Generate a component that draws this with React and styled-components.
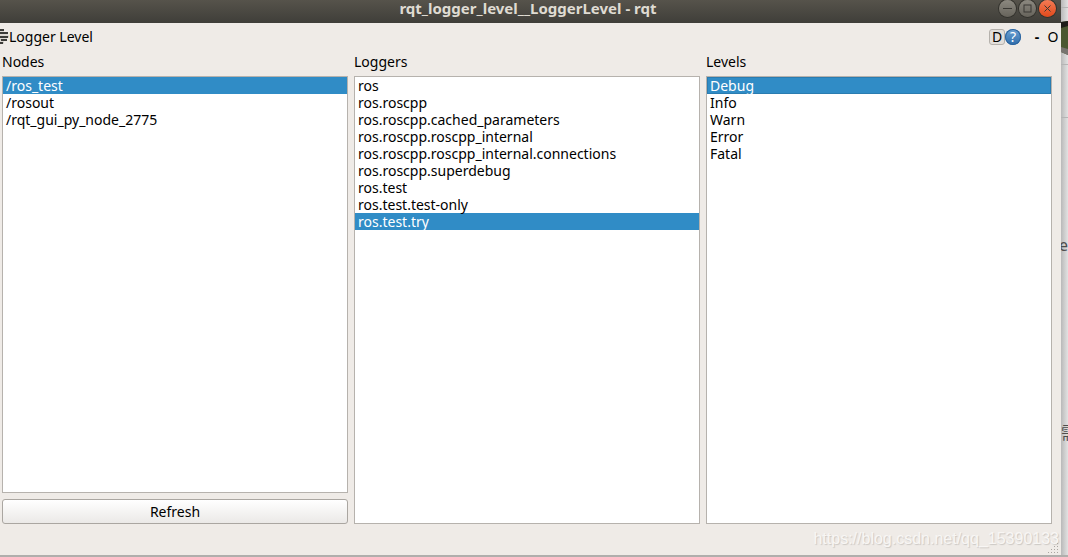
import React, { useState } from "react";
import styled, { createGlobalStyle } from "styled-components";

const nodes = ["/ros_test", "/rosout", "/rqt_gui_py_node_2775"];

const loggers = [
  "ros",
  "ros.roscpp",
  "ros.roscpp.cached_parameters",
  "ros.roscpp.roscpp_internal",
  "ros.roscpp.roscpp_internal.connections",
  "ros.roscpp.superdebug",
  "ros.test",
  "ros.test.test-only",
  "ros.test.try",
];

const levels = ["Debug", "Info", "Warn", "Error", "Fatal"];

const ListPanel = ({ title, items, initial, children, focused }) => {
  const [selected, setSelected] = useState(initial);
  return (
    <Panel>
      <PanelTitle>{title}</PanelTitle>
      <List aria-label={title}>
        {items.map((item) => (
          <li key={item}>
            <Row
              type="button"
              aria-pressed={item === selected}
              $selected={item === selected}
              $focused={focused && item === selected}
              onClick={() => setSelected(item)}
            >
              {item}
            </Row>
          </li>
        ))}
      </List>
      {children}
    </Panel>
  );
};

const App = () => {
  return (
    <Desktop>
      <GlobalStyle />
      <Window>
        <TitleBar>
          <WindowTitle>rqt_logger_level__LoggerLevel - rqt</WindowTitle>
          <WindowControls>
            <WindowButton type="button" aria-label="Minimize">
              <svg width="17" height="17" viewBox="0 0 17 17">
                <path d="M4 8.5h9" />
              </svg>
            </WindowButton>
            <WindowButton type="button" aria-label="Maximize">
              <svg width="17" height="17" viewBox="0 0 17 17">
                <rect x="5" y="5" width="7" height="7" />
              </svg>
            </WindowButton>
            <WindowButton type="button" aria-label="Close" $close>
              <svg width="17" height="17" viewBox="0 0 17 17">
                <path d="M5.5 5.5l6 6M11.5 5.5l-6 6" />
              </svg>
            </WindowButton>
          </WindowControls>
        </TitleBar>

        <DockBar>
          <DockIcon width="9" height="16" viewBox="0 0 9 16">
            <path d="M0 1.5h4M0 4.5h8M0 7.5h9M0 10.5h7M0 13.5h4" stroke="#c9c6c0" />
            <path d="M0 1h4M0 4h8M0 8h8M1 11h6M0 14h3" stroke="#3c3c39" />
          </DockIcon>
          <DockTitle>Logger Level</DockTitle>
          <DockTool type="button" $boxed>
            D
          </DockTool>
          <HelpButton type="button" aria-label="Help">
            ?
          </HelpButton>
          <DockTool type="button" $bold>
            -
          </DockTool>
          <DockTool type="button">O</DockTool>
        </DockBar>

        <Panels>
          <ListPanel title="Nodes" items={nodes} initial="/ros_test">
            <RefreshButton type="button">Refresh</RefreshButton>
          </ListPanel>
          <ListPanel title="Loggers" items={loggers} initial="ros.test.try" />
          <ListPanel title="Levels" items={levels} initial="Debug" focused />
        </Panels>

        <StatusBar>
          <Watermark>https://blog.csdn.net/qq_15390133</Watermark>
          <Grip width="12" height="12" viewBox="0 0 12 12">
            <path d="M10 1.5h1M7 4.5h1M10 4.5h1M4 7.5h1M7 7.5h1M10 7.5h1M1 10.5h1M4 10.5h1M7 10.5h1M10 10.5h1" />
          </Grip>
        </StatusBar>
      </Window>

      <Behind>
        <BehindRule $top={7} />
        <BehindPhoto width="7" height="34" viewBox="0 0 7 34">
          <path d="M0 1l7-1v34l-7-3z" fill="#4a5730" />
          <path d="M0 1l7-1v5l-7 2z" fill="#1d1c18" />
          <path d="M0 26l7 2v6l-7-3z" fill="#77746f" />
        </BehindPhoto>
        <BehindRule $top={64} />
        <BehindRule $top={117} />
        <BehindText $top={235} $end>
          ge
        </BehindText>
        <BehindText $top={423}>需</BehindText>
      </Behind>
    </Desktop>
  );
};

export default App;

const GlobalStyle = createGlobalStyle`
  * {
    box-sizing: border-box;
  }

  body {
    margin: 0;
    font-family: "Noto Sans", "Noto Sans CJK SC", sans-serif;
    font-size: 14px;
    color: #000;
  }

  button {
    margin: 0;
    padding: 0;
    border: 0;
    background: none;
    font: inherit;
    color: inherit;
  }
`;

const Desktop = styled.div`
  display: flex;
  min-height: 100vh;
  padding-bottom: 2px;
  background: #b0aeac;
`;

const Window = styled.main`
  display: flex;
  flex: 1;
  flex-direction: column;
  min-width: 0;
  background: #efebe7;
`;

const TitleBar = styled.header`
  display: grid;
  grid-template-columns: 1fr auto 1fr;
  height: 23px;
  padding-right: 5px;
  background: linear-gradient(#56534b, #3f3e39);
`;

const WindowTitle = styled.h1`
  grid-column: 2;
  margin: 0;
  font-size: 15px;
  font-weight: 700;
  line-height: 16px;
  color: #dfdbd2;
`;

const WindowControls = styled.div`
  display: flex;
  justify-content: flex-end;
  gap: 3px;
`;

const WindowButton = styled.button`
  display: flex;
  width: 17px;
  height: 17px;
  border-radius: 50%;
  background: ${(props) =>
    props.$close
      ? "linear-gradient(#f47b55, #e0491b)"
      : "linear-gradient(#8c8980, #66635b)"};
  box-shadow: 0 0 0 1px #33322d;

  svg {
    fill: none;
    stroke: #3a3934;
    stroke-width: 1;
  }
`;

const DockBar = styled.div`
  display: flex;
  align-items: center;
  height: 27px;
`;

const DockIcon = styled.svg`
  fill: none;
  stroke-width: 2;
`;

const DockTitle = styled.h2`
  flex: 1;
  margin: 0;
  font-size: 14px;
  font-weight: 400;
  line-height: 20px;
`;

const DockTool = styled.button`
  width: 16px;
  height: 16px;
  border: 1px solid ${(props) => (props.$boxed ? "#b5b1ac" : "transparent")};
  border-radius: 3px;
  background: ${(props) => (props.$boxed ? "#e3dfdb" : "none")};
  font-weight: ${(props) => (props.$bold ? 700 : 400)};
  line-height: 14px;
`;

const HelpButton = styled.button`
  width: 16px;
  height: 16px;
  margin-right: 8px;
  border-radius: 50%;
  background: linear-gradient(#6ea3d3, #2e6cab);
  box-shadow: inset 0 0 0 1px #2b639e;
  color: #fff;
  line-height: 16px;
`;

const Panels = styled.div`
  display: grid;
  flex: 1;
  grid-template-columns: repeat(3, minmax(0, 1fr));
  gap: 6px;
  padding: 0 9px 0 2px;
`;

const Panel = styled.section`
  display: flex;
  flex-direction: column;
`;

const PanelTitle = styled.h3`
  margin: 0 0 2px;
  font-size: 14px;
  font-weight: 400;
  line-height: 24px;
`;

const List = styled.ul`
  flex: 1;
  margin: 0;
  padding: 0;
  border: 1px solid #b6b2ad;
  background: #fff;
  list-style: none;
`;

const Row = styled.button`
  display: block;
  width: 100%;
  height: 17px;
  padding: 0 3px;
  background: ${(props) => (props.$selected ? "#308cc6" : "none")};
  box-shadow: ${(props) => (props.$focused ? "inset 0 0 0 1px #2a7cb0" : "none")};
  color: ${(props) => (props.$selected ? "#fff" : "#000")};
  line-height: 17px;
  text-align: left;
  white-space: nowrap;
`;

const RefreshButton = styled.button`
  height: 25px;
  margin-top: 6px;
  border: 1px solid #aaa6a1;
  border-radius: 3px;
  background: linear-gradient(#fff, #ebe9e7);
`;

const StatusBar = styled.footer`
  position: relative;
  display: flex;
  justify-content: flex-end;
  height: 31px;
  padding-right: 2px;
`;

const Watermark = styled.span`
  font-family: "Liberation Sans", sans-serif;
  font-size: 16px;
  line-height: 30px;
  color: #f8f6f4;
  text-shadow: 1px 1px 1px #cbc7c3;
`;

/* the resize grip sits over the end of the status text */
const Grip = styled.svg`
  position: absolute;
  right: 2px;
  bottom: 1px;
  stroke: #aaa6a1;
`;

const Behind = styled.aside`
  position: relative;
  width: 7px;
  overflow: hidden;
  background: linear-gradient(90deg, #b9b9b9, #e2e2e2);
`;

const BehindRule = styled.div`
  position: absolute;
  top: ${(props) => props.$top}px;
  width: 100%;
  height: 1px;
  background: #b5b5b5;
`;

const BehindPhoto = styled.svg`
  position: absolute;
  top: 21px;
  left: 0;
`;

const BehindText = styled.span`
  position: absolute;
  top: ${(props) => props.$top}px;
  ${(props) => (props.$end ? "right: 0;" : "left: 0;")}
  font-size: 16px;
  line-height: 20px;
  color: #4d4d4d;
`;
